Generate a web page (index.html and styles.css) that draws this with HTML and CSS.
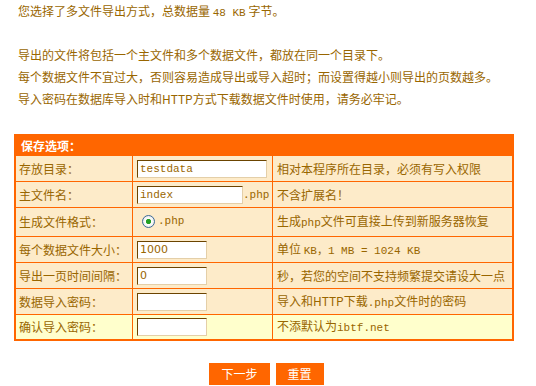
FILE: index.html
```html
<!DOCTYPE html>
<html>
<head>
    <meta charset="utf-8">
    <title>数据导出</title>
    <link rel="stylesheet" href="styles.css">
</head>
<body>
    <div class="mainBox">
        <div class="intro">
            <p>您选择了多文件导出方式，总数据量 <span class="mono">48 KB</span> 字节。</p>
            <p class="blank"></p>
            <p>导出的文件将包括一个主文件和多个数据文件，都放在同一个目录下。</p>
            <p>每个数据文件不宜过大，否则容易造成导出或导入超时；而设置得越小则导出的页数越多。</p>
            <p>导入密码在数据库导入时和HTTP方式下载数据文件时使用，请务必牢记。</p>
        </div>
        <table class="optTable">
            <colgroup>
                <col class="colLabel">
                <col class="colInput">
                <col>
            </colgroup>
            <tr class="headRow">
                <td colspan="3">保存选项：</td>
            </tr>
            <tr>
                <td>存放目录：</td>
                <td><input class="textBox wide mono" type="text" value="testdata"></td>
                <td>相对本程序所在目录，必须有写入权限</td>
            </tr>
            <tr>
                <td>主文件名：</td>
                <td><input class="textBox mid mono" type="text" value="index"><span class="mono">.php</span></td>
                <td>不含扩展名！</td>
            </tr>
            <tr class="tallRow">
                <td>生成文件格式：</td>
                <td><label class="radioLine"><input class="radio" type="radio" name="fmt" checked><span class="mono">.php</span></label></td>
                <td>生成<span class="mono">php</span>文件可直接上传到新服务器恢复</td>
            </tr>
            <tr>
                <td>每个数据文件大小：</td>
                <td><input class="textBox short" type="text" value="1000"></td>
                <td>单位 <span class="mono">KB，1 MB = 1024 KB</span></td>
            </tr>
            <tr>
                <td>导出一页时间间隔：</td>
                <td><input class="textBox short" type="text" value="0"></td>
                <td>秒，若您的空间不支持频繁提交请设大一点</td>
            </tr>
            <tr>
                <td>数据导入密码：</td>
                <td><input class="textBox short" type="password"></td>
                <td>导入和HTTP下载<span class="mono">.php</span>文件时的密码</td>
            </tr>
            <tr class="lastRow">
                <td>确认导入密码：</td>
                <td><input class="textBox short" type="password"></td>
                <td>不添默认为<span class="mono">ibtf.net</span></td>
            </tr>
        </table>
        <div class="btnBar">
            <button class="btn">下一步</button>
            <button class="btn">重置</button>
        </div>
    </div>
</body>
</html>
```

FILE: styles.css
```css
body {
    margin: 0;
    background-color: #ffffff;
    color: #996600;
    font-family: "Noto Sans CJK SC", "DejaVu Sans", sans-serif;
    font-size: 12px;
}

.mainBox {
    width: 500px;
    padding-left: 14px;
}

.intro {
    padding-left: 4px;
    height: 134px;
}

.intro p {
    margin: 0;
    line-height: 22px;
    height: 22px;
    white-space: nowrap;
}

.mono {
    font-family: "Liberation Mono", "Noto Sans CJK SC", monospace;
    font-size: 11px;
}

.optTable {
    width: 500px;
    table-layout: fixed;
    border: 1px solid #ff6600;
    border-spacing: 1px;
    background-color: #ff6600;
}

.colLabel {
    width: 116px;
}

.colInput {
    width: 139px;
}

.optTable td {
    height: 25px;
    padding: 0 3px;
    background-color: #fdebc9;
    line-height: 16px;
    white-space: nowrap;
    box-sizing: border-box;
}

.optTable td + td {
    padding-left: 4px;
}

.headRow td {
    height: 19px;
    padding-left: 5px;
    background-color: #ff6600;
    color: #ffffff;
    font-weight: bold;
}

.tallRow td {
    height: 28px;
}

.optTable .lastRow td {
    height: 24px;
    background-color: #ffffcc;
}

.textBox {
    display: inline-block;
    height: 18px;
    margin: 0;
    padding: 0 2px;
    box-sizing: border-box;
    border-width: 1px;
    border-style: solid;
    border-color: #6b4400 #e4cfa8 #e4cfa8 #6b4400;
    background-color: #ffffff;
    color: #996600;
    font-family: "DejaVu Sans", sans-serif;
    font-size: 11px;
    vertical-align: middle;
    outline: none;
}

.textBox.mono {
    font-family: "Liberation Mono", monospace;
    font-size: 11px;
}

.wide {
    width: 130px;
}

.mid {
    width: 106px;
}

.short {
    width: 70px;
}

.radioLine {
    display: inline-flex;
    align-items: center;
    gap: 3px;
    padding-left: 5px;
}

.radio {
    appearance: none;
    width: 13px;
    height: 13px;
    margin: 2px 0 0;
    border: 1px solid #3c6a96;
    border-radius: 50%;
    background: radial-gradient(circle, #25a025 0, #25a025 2.2px, #ffffff 3px, #f0f0f0 5px, #d8dde4 6px);
}

.btnBar {
    display: flex;
    justify-content: center;
    gap: 6px;
    margin-top: 22px;
    padding-left: 5px;
}

.btn {
    height: 22px;
    padding: 0 12px;
    border: none;
    background-color: #ff6600;
    color: #ffffff;
    font-family: "Noto Sans CJK SC", sans-serif;
    font-size: 12px;
    line-height: 22px;
}
```
